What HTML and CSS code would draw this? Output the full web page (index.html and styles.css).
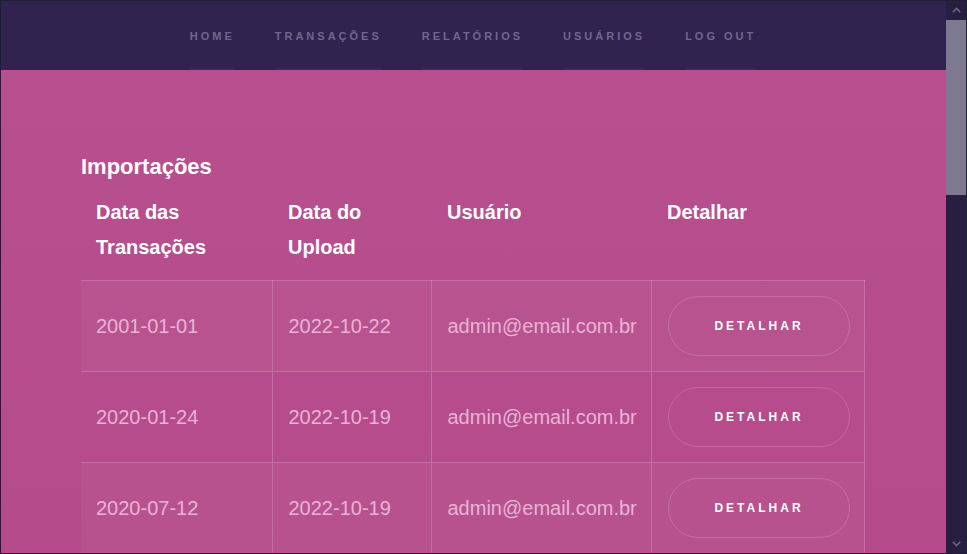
FILE: index.html
```html
<!DOCTYPE html>
<html lang="pt-BR">
<head>
<meta charset="utf-8">
<title>Importações</title>
<link rel="stylesheet" href="styles.css">
</head>
<body>
<div class="frame"></div>
<div class="app">
  <div class="page">
    <nav class="topnav">
      <a class="navlink" href="#">HOME</a>
      <a class="navlink" href="#">TRANSAÇÕES</a>
      <a class="navlink" href="#">RELATÓRIOS</a>
      <a class="navlink" href="#">USUÁRIOS</a>
      <a class="navlink" href="#">LOG OUT</a>
    </nav>
    <main class="content">
      <h2 class="title">Importações</h2>
      <table class="imports">
        <colgroup>
          <col class="c1"><col class="c2"><col class="c3"><col class="c4">
        </colgroup>
        <thead>
          <tr>
            <th>Data das<br>Transações</th>
            <th>Data do<br>Upload</th>
            <th>Usuário</th>
            <th>Detalhar</th>
          </tr>
        </thead>
        <tbody>
          <tr><td>2001-01-01</td><td>2022-10-22</td><td>admin@email.com.br</td><td><button class="btn">DETALHAR</button></td></tr>
          <tr><td>2020-01-24</td><td>2022-10-19</td><td>admin@email.com.br</td><td><button class="btn">DETALHAR</button></td></tr>
          <tr><td>2020-07-12</td><td>2022-10-19</td><td>admin@email.com.br</td><td><button class="btn">DETALHAR</button></td></tr>
        </tbody>
      </table>
    </main>
  </div>
  <div class="scrollbar">
    <div class="sb-btn">
      <svg width="9" height="6" viewBox="0 0 9 6"><polyline points="0.8,5.2 4.5,1.5 8.2,5.2" fill="none" stroke="#6c6786" stroke-width="1.6"/></svg>
    </div>
    <div class="sb-thumb"></div>
    <div class="sb-track"></div>
    <div class="sb-btn">
      <svg width="9" height="6" viewBox="0 0 9 6"><polyline points="0.8,0.8 4.5,4.5 8.2,0.8" fill="none" stroke="#6c6786" stroke-width="1.6"/></svg>
    </div>
  </div>
</div>
</body>
</html>
```

FILE: styles.css
```css
html, body {
  margin: 0;
  height: 100%;
  overflow: hidden;
}
body {
  background: #b84f8d;
  font-family: "Liberation Sans", Arial, sans-serif;
  color: #ffffff;
}
.frame {
  position: fixed;
  inset: 0;
  border: 1px solid #1b2033;
  pointer-events: none;
  z-index: 5;
}
.app {
  display: flex;
  height: 100vh;
}
.page {
  flex: 1;
  overflow: hidden;
  background: linear-gradient(180deg, #b84f8e 0%, #b54b8b 100%);
}
.scrollbar {
  width: 21px;
  flex: none;
  display: flex;
  flex-direction: column;
  background: #261f40;
}
.sb-btn {
  height: 20px;
  flex: none;
  display: flex;
  align-items: center;
  justify-content: center;
  background: #261f40;
}
.sb-thumb {
  height: 175px;
  flex: none;
  background: #7d7990;
}
.sb-track {
  flex: 1;
}
.topnav {
  height: 70px;
  background: #30234f;
  display: flex;
  justify-content: center;
  align-items: stretch;
  gap: 40px;
}
.navlink {
  display: flex;
  align-items: center;
  padding-top: 4px;
  border-bottom: 2px solid #36285a;
  color: #6e688c;
  text-decoration: none;
  font-size: 11px;
  font-weight: bold;
  letter-spacing: 3px;
  line-height: 1;
}
.content {
  padding: 84px 81px 0 81px;
}
.title {
  margin: 0 0 15px;
  font-size: 22px;
  line-height: 26px;
  font-weight: bold;
}
.imports {
  width: 783px;
  border-collapse: collapse;
  table-layout: fixed;
}
.c1 { width: 191px; }
.c2 { width: 159px; }
.c3 { width: 220px; }
.c4 { width: 213px; }
.imports th {
  text-align: left;
  vertical-align: top;
  font-size: 20px;
  line-height: 35px;
  font-weight: bold;
  padding: 0 15px 15px 15px;
}
.imports th:nth-child(n+2) {
  padding-left: 16px;
}
.imports td {
  border-top: 1px solid rgba(255, 255, 255, 0.2);
  border-right: 1px solid rgba(255, 255, 255, 0.2);
  padding: 15px;
  font-size: 20px;
  line-height: 60px;
  color: #e8b3d4;
  white-space: nowrap;
  overflow: hidden;
}
.imports td:nth-child(n+2) {
  padding-left: 16px;
}
.imports tbody tr:nth-child(odd) {
  background: rgba(255, 255, 255, 0.04);
}
.btn {
  display: block;
  width: 182px;
  height: 60px;
  border-radius: 30px;
  border: 1px solid rgba(255, 255, 255, 0.16);
  background: transparent;
  color: #ffffff;
  font-family: "Liberation Sans", Arial, sans-serif;
  font-size: 12px;
  font-weight: bold;
  letter-spacing: 3px;
  padding: 0 0 0 1px;
  cursor: pointer;
}
```
